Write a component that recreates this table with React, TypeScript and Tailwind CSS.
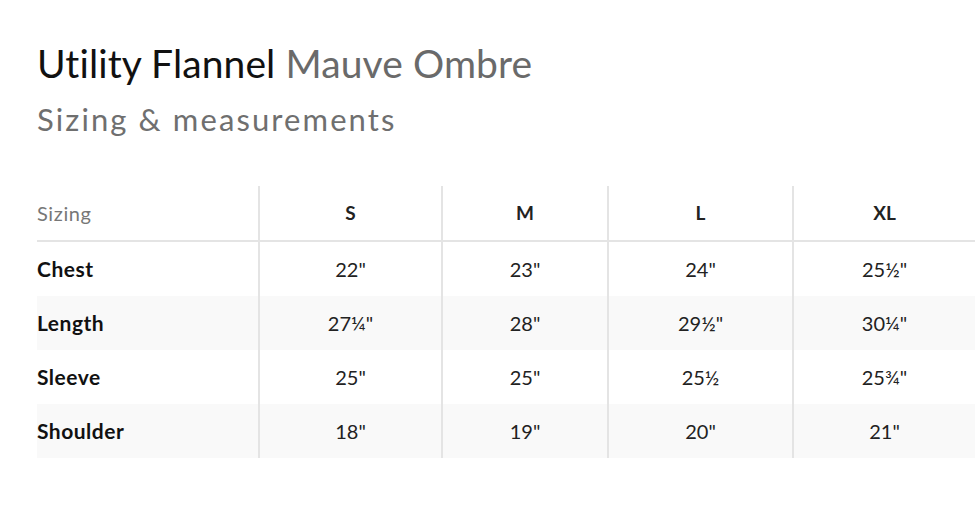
import React from "react";

const rows = [
  { label: "Chest", vals: ['22"', '23"', '24"', '25½"'], shade: false },
  { label: "Length", vals: ['27¼"', '28"', '29½"', '30¼"'], shade: true },
  { label: "Sleeve", vals: ['25"', '25"', "25½", '25¾"'], shade: false },
  { label: "Shoulder", vals: ['18"', '19"', '20"', '21"'], shade: true },
];

const widths = ["w-[183px]", "w-[166px]", "w-[185px]", "flex-1"];

export default function App() {
  return (
    <div
      className="w-[975px] h-[525px] bg-white overflow-hidden pl-[37px] pt-[37px]"
      style={{ fontFamily: "Lato, 'Noto Sans', sans-serif" }}
    >
      <h1 className="text-[39px] leading-[52px] text-[#111] font-normal tracking-[0.1px]">
        Utility Flannel <span className="text-[#6a6a6a]">Mauve Ombre</span>
      </h1>
      <h2 className="text-[31px] leading-[42px] text-[#6f6f6f] font-normal mt-[9px] tracking-[2.1px]">
        Sizing &amp; measurements
      </h2>
      <div className="mt-[46px] w-[938px]">
        <div className="flex h-[56px] border-b-2 border-[#e4e4e4]">
          <div className="w-[221px] flex items-center text-[20px] text-[#777] tracking-[0.6px]">Sizing</div>
          {["S", "M", "L", "XL"].map((s, i) => (
            <div
              key={s}
              className={`${widths[i]} border-l-2 border-[#e4e4e4] flex items-center justify-center text-[19px] font-bold text-[#222]`}
            >
              {s}
            </div>
          ))}
        </div>
        {rows.map((r) => (
          <div key={r.label} className={`flex h-[54px] ${r.shade ? "bg-[#f9f9f9]" : "bg-white"}`}>
            <div className="w-[221px] flex items-center text-[21px] font-bold text-[#111] tracking-[0.5px]">
              {r.label}
            </div>
            {r.vals.map((v, i) => (
              <div
                key={i}
                className={`${widths[i]} border-l-2 border-[#e4e4e4] flex items-center justify-center text-[20px] text-[#222]`}
              >
                {v}
              </div>
            ))}
          </div>
        ))}
      </div>
    </div>
  );
}
